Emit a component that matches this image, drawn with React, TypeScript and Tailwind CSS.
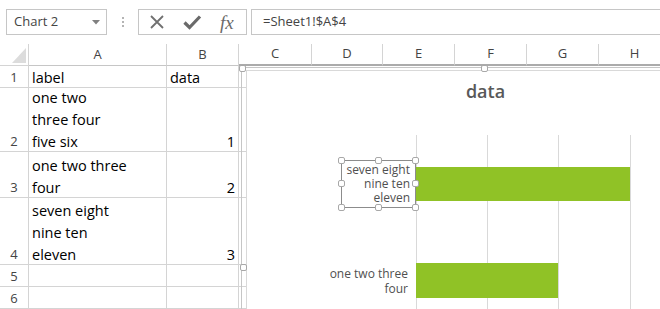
import React from "react";

const cols = [
  { name: "A", w: "w-[138px]" },
  { name: "B", w: "w-[72px]" },
  { name: "C", w: "w-[73px]" },
  { name: "D", w: "w-[71px]" },
  { name: "E", w: "w-[72px]" },
  { name: "F", w: "w-[72px]" },
  { name: "G", w: "w-[72px]" },
  { name: "H", w: "w-[72px]" },
];

const rows = [
  { n: 1, h: "h-[22px]", label: ["label"], data: "data", text: true },
  { n: 2, h: "h-[64px]", label: ["one two", "three four", "five six"], data: "1" },
  { n: 3, h: "h-[46px]", label: ["one two three", "four"], data: "2" },
  { n: 4, h: "h-[67px]", label: ["seven eight", "nine ten", "eleven"], data: "3" },
  { n: 5, h: "h-[22px]", label: [], data: "" },
  { n: 6, h: "h-[22px]", label: [], data: "" },
];

function Handle({ className }: { className: string }) {
  return (
    <div
      className={`absolute w-[7px] h-[7px] rounded-[2px] border border-[#a8a8a8] bg-white ${className}`}
    />
  );
}

function FormulaBar() {
  return (
    <div className="h-[44px] flex items-start pt-[9px] pl-[6px] text-[13px] text-[#444]">
      <div className="w-[101px] h-[26px] border border-[#c6c6c6] flex items-center justify-between pl-[7px] pr-[6px]">
        <span>Chart 2</span>
        <svg width="8" height="5" viewBox="0 0 8 5">
          <path d="M0 0h8L4 4.5z" fill="#808080" />
        </svg>
      </div>
      <div className="w-[31px] h-[26px] flex flex-col items-center justify-center gap-[2px]">
        <div className="w-[2px] h-[2px] bg-[#b4b4b4]" />
        <div className="w-[2px] h-[2px] bg-[#b4b4b4]" />
        <div className="w-[2px] h-[2px] bg-[#b4b4b4]" />
      </div>
      <div className="w-[109px] h-[26px] border border-[#c6c6c6] flex items-center pl-[10px]">
        <svg width="16" height="16" viewBox="0 0 16 16">
          <path d="M2 2L14 14M14 2L2 14" stroke="#707070" strokeWidth="1.8" />
        </svg>
        <svg width="19" height="16" viewBox="0 0 19 16" className="ml-[18px]">
          <path d="M1.5 8.5L6.5 13.5L17 2.5" stroke="#6a6a6a" strokeWidth="3.2" fill="none" />
        </svg>
        <span className="ml-[18px] font-['Liberation_Serif',serif] italic text-[19px] text-[#6a6a6a] leading-none">
          fx
        </span>
      </div>
      <div className="flex-1 h-[26px] ml-[4px] border-y border-l border-[#c6c6c6] flex items-center pl-[11px]">
        =Sheet1!$A$4
      </div>
    </div>
  );
}

function Chart() {
  return (
    <div className="absolute left-[241px] top-[67px] w-[488px] h-[400px] border-l border-t border-[#c6c6c6] font-['Open_Sans',sans-serif]">
      <div className="absolute left-[4px] top-[2px] right-0 bottom-0 border-l border-t border-[#d9d9d9] bg-white" />
      <Handle className="left-[-3px] top-[-3px]" />
      <Handle className="left-[239px] top-[-3px]" />
      <Handle className="left-[-2px] top-[196px]" />
      <div className="absolute left-0 right-0 top-[10px] text-center text-[18px] font-semibold text-[#595959]">
        data
      </div>
      <svg className="absolute left-0 top-0" width="488" height="250">
        {[174, 245, 316, 388].map((x) => (
          <line key={x} x1={x + 0.5} x2={x + 0.5} y1={67} y2={250} stroke="#d9d9d9" strokeWidth="1" />
        ))}
        <rect x="174" y="99" width="214" height="34" fill="#90c226" />
        <rect x="174" y="195" width="142" height="35" fill="#90c226" />
      </svg>
      <div className="absolute left-[99px] top-[92px] w-[75px] h-[48px] border border-[#8c8c8c] flex flex-col items-end justify-center pr-[5px] text-[12px] leading-[14px] text-[#505050]">
        <span>seven eight</span>
        <span>nine ten</span>
        <span>eleven</span>
        <Handle className="left-[-4px] top-[-4px]" />
        <Handle className="left-[33px] top-[-4px]" />
        <Handle className="right-[-4px] top-[-4px]" />
        <Handle className="left-[-4px] top-[19px]" />
        <Handle className="right-[-4px] top-[19px]" />
        <Handle className="left-[-4px] bottom-[-4px]" />
        <Handle className="left-[33px] bottom-[-4px]" />
        <Handle className="right-[-4px] bottom-[-4px]" />
      </div>
      <div className="absolute left-[58px] top-[198px] w-[108px] flex flex-col items-end text-[12px] leading-[15px] text-[#505050]">
        <span>one two three</span>
        <span>four</span>
      </div>
    </div>
  );
}

export default function App() {
  return (
    <div className="relative w-[660px] h-[309px] overflow-hidden bg-white font-['Open_Sans',sans-serif]">
      <FormulaBar />
      <div className="flex h-[22px] text-[13px] text-[#444]">
        <div className="w-[29px] shrink-0 border-r border-b border-[#d4d4d4] relative">
          <svg className="absolute left-[12px] top-[4px]" width="14" height="15" viewBox="0 0 14 15">
            <path d="M14 0V15H0z" fill="#dcdcdc" />
          </svg>
        </div>
        {cols.map((c, i) => (
          <div
            key={c.name}
            className={`${c.w} shrink-0 flex items-center justify-center border-r border-[#d4d4d4] ${
              i < 2 ? "border-b border-b-[#c6c6c6]" : "border-b-2 border-b-[#ababab]"
            }`}
          >
            {c.name}
          </div>
        ))}
      </div>
      {rows.map((r) => (
        <div key={r.n} className={`flex ${r.h} border-b border-[#d4d4d4]`}>
          <div className="w-[29px] shrink-0 border-r border-[#d4d4d4] flex items-end justify-center text-[13px] text-[#444] leading-[22px]">
            <span className="relative top-[1px]">{r.n}</span>
          </div>
          <div className="w-[138px] shrink-0 border-r border-[#d4d4d4] flex flex-col justify-end pl-[3px] text-[14.5px] leading-[22px] text-black">
            <div className="relative top-[2px] flex flex-col">
              {r.label.map((l) => (
                <span key={l}>{l}</span>
              ))}
            </div>
          </div>
          <div
            className={`w-[72px] shrink-0 border-r border-[#d4d4d4] flex items-end px-[3px] text-[14.5px] leading-[22px] text-black ${
              r.text ? "justify-start" : "justify-end"
            }`}
          >
            <span className="relative top-[2px]">{r.data}</span>
          </div>
          <div className="w-[5px] shrink-0" />
        </div>
      ))}
      <Chart />
    </div>
  );
}
